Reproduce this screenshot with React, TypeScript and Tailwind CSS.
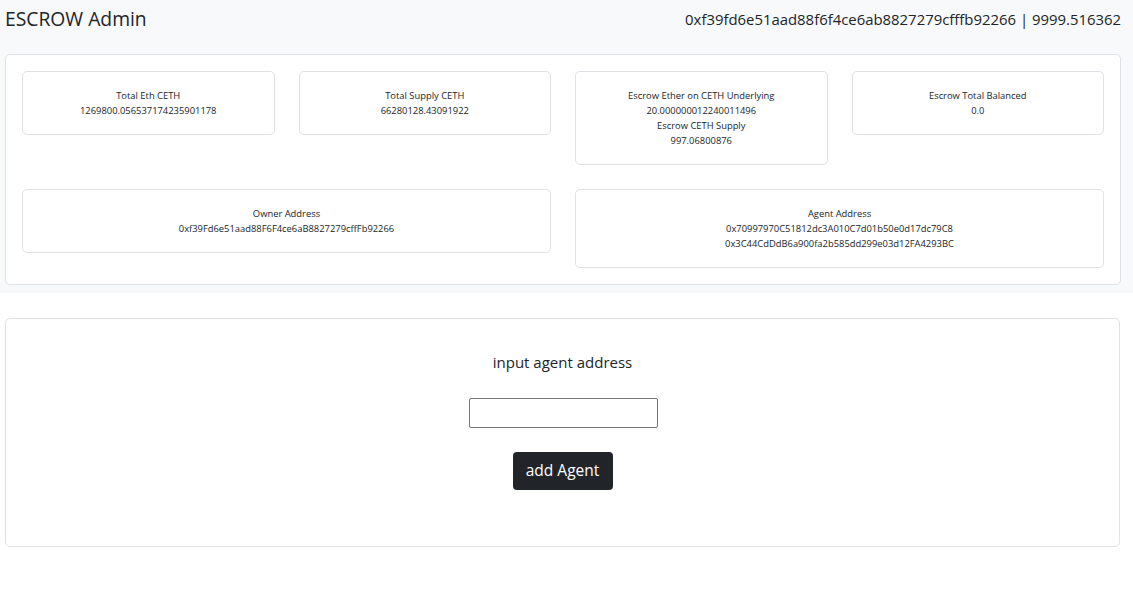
import React from "react";

const font = { fontFamily: '"Open Sans", "Noto Sans", Arial, sans-serif' };

const InfoBox: React.FC<{ lines: string[]; className?: string }> = ({ lines, className }) => (
  <div
    className={`border border-[#dee2e6] rounded-[5px] bg-white py-4 px-4 text-center text-[9.4px] leading-[15px] text-[#212529] ${className ?? ""}`}
  >
    {lines.map((l, i) => (
      <div key={i}>{l}</div>
    ))}
  </div>
);

export default function App() {
  return (
    <div className="min-h-[614px] bg-white text-[#212529]" style={font}>
      {/* Top section - header and stats */}
      <div className="bg-[#f8f9fa] pl-[5px] pr-[12px] pb-2">
        <div className="h-[38px] flex items-center justify-between">
          <span className="text-[19.3px] leading-[30px]">ESCROW Admin</span>
          <span className="text-[14.9px] leading-[24px]">
            0xf39fd6e51aad88f6f4ce6ab8827279cfffb92266 | 9999.516362
          </span>
        </div>

        <div className="mt-4 bg-white border border-[#dee2e6] rounded-[5px] p-4">
          <div className="grid grid-cols-4 gap-x-6 items-start">
            <InfoBox lines={["Total Eth CETH", "1269800.056537174235901178"]} />
            <InfoBox lines={["Total Supply CETH", "66280128.43091922"]} />
            <InfoBox
              lines={[
                "Escrow Ether on CETH Underlying",
                "20.000000012240011496",
                "Escrow CETH Supply",
                "997.06800876",
              ]}
            />
            <InfoBox lines={["Escrow Total Balanced", "0.0"]} />
          </div>
          <div className="grid grid-cols-2 gap-x-6 mt-6 items-start">
            <InfoBox lines={["Owner Address", "0xf39Fd6e51aad88F6F4ce6aB8827279cffFb92266"]} />
            <InfoBox
              lines={[
                "Agent Address",
                "0x70997970C51812dc3A010C7d01b50e0d17dc79C8",
                "0x3C44CdDdB6a900fa2b585dd299e03d12FA4293BC",
              ]}
            />
          </div>
        </div>
      </div>

      {/* Add agent form */}
      <div className="ml-[5px] mr-[13px] mt-[25px] border border-[#dee2e6] rounded-[5px] pt-[31px] pb-[56px] flex flex-col items-center">
        <div className="text-[15px] leading-[24px]">input agent address</div>
        <input
          type="text"
          className="mt-6 ml-[2px] w-[189px] h-[30px] border border-[#767676] rounded-[2px] bg-white px-1 outline-none"
        />
        <button className="mt-6 w-[100px] h-[38px] bg-[#212529] text-white text-[15.5px] rounded-[4px]">
          add Agent
        </button>
      </div>
    </div>
  );
}
